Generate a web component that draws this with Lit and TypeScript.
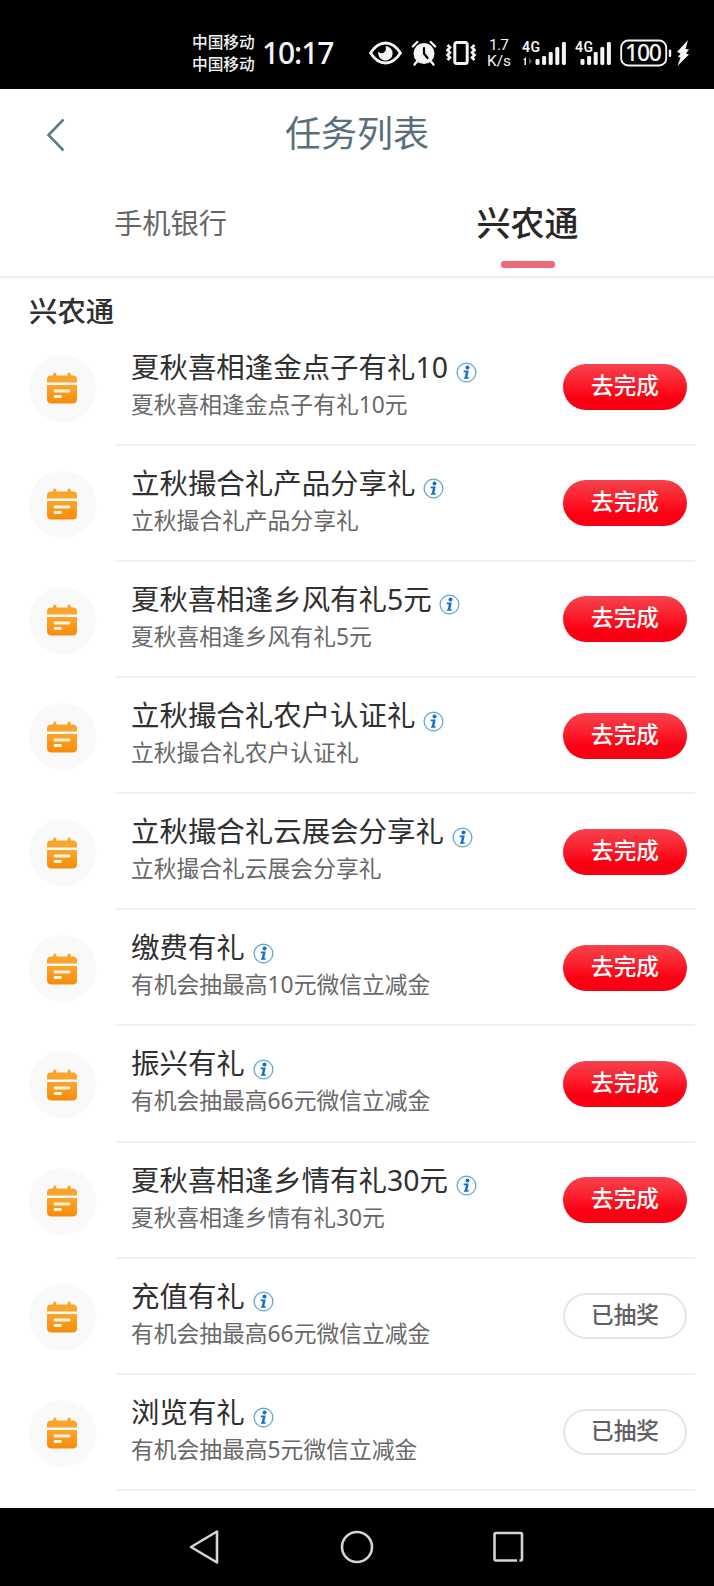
import { LitElement, html, css, svg } from "lit";
import { customElement, property } from "lit/decorators.js";

interface Task {
  title: string;
  desc: string;
  done: boolean;
}

const FONT = css`"Noto Sans", "Noto Sans CJK SC", sans-serif`;

const TASKS: Task[] = [
  { title: "夏秋喜相逢金点子有礼10", desc: "夏秋喜相逢金点子有礼10元", done: false },
  { title: "立秋撮合礼产品分享礼", desc: "立秋撮合礼产品分享礼", done: false },
  { title: "夏秋喜相逢乡风有礼5元", desc: "夏秋喜相逢乡风有礼5元", done: false },
  { title: "立秋撮合礼农户认证礼", desc: "立秋撮合礼农户认证礼", done: false },
  { title: "立秋撮合礼云展会分享礼", desc: "立秋撮合礼云展会分享礼", done: false },
  { title: "缴费有礼", desc: "有机会抽最高10元微信立减金", done: false },
  { title: "振兴有礼", desc: "有机会抽最高66元微信立减金", done: false },
  { title: "夏秋喜相逢乡情有礼30元", desc: "夏秋喜相逢乡情有礼30元", done: false },
  { title: "充值有礼", desc: "有机会抽最高66元微信立减金", done: true },
  { title: "浏览有礼", desc: "有机会抽最高5元微信立减金", done: true },
];

@customElement("status-bar")
class StatusBar extends LitElement {
  static styles = css`
    :host {
      display: flex;
      align-items: center;
      box-sizing: border-box;
      height: 89px;
      padding: 17px 0 0 192px;
      background: #000;
      color: #f4f4f4;
      font-family: ${FONT};
    }
    svg { display: block; flex: none; overflow: visible; }
    .carrier { width: 64px; font-size: 15.7px; font-weight: 500; line-height: 22px; white-space: nowrap; }
    .time {
      width: 113px;
      box-sizing: border-box;
      padding-left: 6px;
      font-size: 30px;
      font-weight: 500;
      line-height: 40px;
      letter-spacing: -1.1px;
      white-space: nowrap;
    }
    .icons { display: flex; align-items: center; gap: 9px; }
    .bolt { margin-left: -4px; }
    .speed { font: 400 15.5px Roboto, sans-serif; fill: #f4f4f4; }
    .net { font: 600 14px Roboto, sans-serif; fill: #f4f4f4; }
    .level { font: 500 23px "Noto Sans", sans-serif; fill: #f4f4f4; }
  `;

  private bars(x: number) {
    return [6, 9, 13, 18, 23].map(
      (h, i) => svg`<rect x=${x + i * 6.6} y=${25 - h} width="4" height=${h} rx="1.4" fill="#f4f4f4"/>`,
    );
  }

  render() {
    return html`
      <div class="carrier">中国移动<br />中国移动</div>
      <div class="time">10:17</div>
      <div class="icons">
        <svg width="33" height="26" viewBox="0 0 33 26" fill="none">
          <path d="M1.500 13Q8 3 16.500 3T31.500 13Q25 23 16.500 23T1.500 13Z" stroke="#f4f4f4" stroke-width="2.800" />
          <path d="M16.500 6A7.300 7.300 0 1 1 9.300 11.500Q11.500 14.200 14.500 12.700Q18 10.500 16.500 6Z" fill="#f4f4f4" />
        </svg>
        <svg width="26" height="26" viewBox="0 0 26 26" fill="none" stroke-linecap="round">
          <circle cx="13" cy="13.500" r="10.500" fill="#f4f4f4" />
          <path d="M1.800 6.500L6.300 2M24.200 6.500L19.700 2M6 21.500L3.500 24.500M20 21.500L22.500 24.500" stroke="#f4f4f4" stroke-width="2.400" />
          <path d="M13 8V13.500L16.500 18" stroke="#000" stroke-width="2.200" />
        </svg>
        <svg width="30" height="26" viewBox="0 0 30 26" fill="none" stroke="#f4f4f4">
          <rect x="8.800" y="2.500" width="12.400" height="21" rx="2" stroke-width="3" />
          <path d="M1.500 5L4 7.500L1.500 10L4 12.500L1.500 15L4 17.500L1.500 20M28.500 5L26 7.500L28.500 10L26 12.500L28.500 15L26 17.500L28.500 20" stroke-width="2.600" />
        </svg>
        <svg width="28" height="30" viewBox="0 0 28 30">
          <text class="speed" x="4" y="12" textLength="20">1.7</text>
          <text class="speed" x="2" y="27.500" textLength="24">K/s</text>
        </svg>
        <svg width="44" height="26" viewBox="0 0 44 26">
          <text class="net" x="0" y="11.500" textLength="18">4G</text>
          <path d="M1 20L4 17V25H2.500V20Z" fill="#f4f4f4" />
          <path d="M7 17V25L10 21.500Z" fill="#555" />
          ${this.bars(13.5)}
        </svg>
        <svg width="36" height="26" viewBox="0 0 36 26">
          <text class="net" x="0" y="11.500" textLength="18">4G</text>
          ${this.bars(5.5)}
        </svg>
        <svg width="52" height="28" viewBox="0 0 52 28">
          <rect x="1.200" y="1.500" width="45" height="25" rx="7" fill="none" stroke="#f4f4f4" stroke-width="1.900" />
          <text class="level" x="5" y="22.200" textLength="37">100</text>
          <rect x="48.800" y="10.500" width="2.400" height="7.500" rx="1" fill="#f4f4f4" />
        </svg>
        <svg class="bolt" width="12" height="26" viewBox="0 0 12 26">
          <path d="M11 0L0 12L3.500 13.500L1 17L3.500 17.500L0.500 26L12 14.500L9 13.500L12 9.500L8.500 9Z" fill="#f4f4f4" />
        </svg>
      </div>
    `;
  }
}

@customElement("task-row")
class TaskRow extends LitElement {
  @property({ attribute: false }) task!: Task;

  static styles = css`
    :host { display: flex; height: 116.150px; padding: 0 19px 0 29px; font-family: ${FONT}; }
    svg { display: block; flex: none; }
    .badge {
      display: flex;
      align-items: center;
      justify-content: center;
      box-sizing: border-box;
      width: 67px;
      height: 67px;
      margin-top: 25px;
      padding: 0 1px 0 0;
      border-radius: 50%;
      background: #f9f9f9;
    }
    .body {
      flex: 1;
      display: flex;
      box-sizing: border-box;
      margin-left: 20px;
      padding: 17px 8px 0 15px;
      border-bottom: 2px solid #f0f0f0;
    }
    .text { flex: 1; white-space: nowrap; }
    .title { display: flex; height: 41px; line-height: 40px; font-size: 28.450px; color: #303030; }
    .info { margin: 15.500px 0 0 7.800px; }
    .desc { height: 34px; line-height: 34px; font-size: 22.780px; color: #686868; }
    .action {
      box-sizing: border-box;
      width: 124px;
      height: 46px;
      margin-top: 17.500px;
      border-radius: 23px;
      background: linear-gradient(#f5434d 0%, #fb1c2a 45%, #fb0012 72%, #f80014 100%);
      color: #fff;
      font-size: 22.600px;
      font-weight: 500;
      line-height: 44px;
      text-align: center;
    }
    .done { background: #fff; border: 2px solid #e6e6e6; color: #606060; line-height: 40px; }
  `;

  render() {
    const { title, desc, done } = this.task;
    return html`
      <div class="badge">
        <svg width="30" height="32" viewBox="0 0 30 32">
          <defs>
            <linearGradient id="amber" x1="0" y1="0" x2="0" y2="1">
              <stop offset="0" stop-color="#faa62c" />
              <stop offset="1" stop-color="#f78b0b" />
            </linearGradient>
          </defs>
          <path d="M0 10.500V7.500Q0 3.500 4 3.500H6L6.500 1.200Q7.800 -0.200 9.100 1.200L9.600 3.500H20.400L20.900 1.200Q22.200 -0.200 23.500 1.200L24 3.500H26Q30 3.500 30 7.500V10.500Z" fill="#f9a42b" />
          <path d="M0 13H30V27Q30 31.500 25.500 31.500H4.500Q0 31.500 0 27Z" fill="url(#amber)" />
          <path d="M8 19H22M8 24.500H13.500" stroke="#fff5e2" stroke-width="2.800" stroke-linecap="round" />
        </svg>
      </div>
      <div class="body">
        <div class="text">
          <div class="title">
            ${title}
            <svg class="info" width="21" height="21" viewBox="0 0 21 21">
              <circle cx="10.500" cy="10.500" r="9.400" fill="#fbfeff" stroke="#6ba6cf" stroke-width="1.300" />
              <circle cx="11.500" cy="5.600" r="2" fill="#176fc0" />
              <path d="M7.800 8.500H12.700L11.300 15.200H12.900L12.400 16.700H7.800L8.100 15.500L8.900 15L9.800 10.200H7.600Z" fill="#176fc0" />
            </svg>
          </div>
          <div class="desc">${desc}</div>
        </div>
        <div class="action ${done ? "done" : ""}">${done ? "已抽奖" : "去完成"}</div>
      </div>
    `;
  }
}

@customElement("app-root")
class AppRoot extends LitElement {
  static styles = css`
    :host {
      display: flex;
      flex-direction: column;
      width: 714px;
      height: 1586px;
      overflow: hidden;
      background: #fff;
      font-family: ${FONT};
    }
    svg { display: block; }
    .header {
      display: grid;
      grid-template-columns: 66px 1fr 66px;
      align-items: center;
      height: 92px;
      color: #5a6e7a;
    }
    .back { margin-left: 46px; }
    .heading { padding-bottom: 2px; font-size: 36px; line-height: 50px; text-align: center; }
    .tabs {
      display: grid;
      grid-template-columns: 341px 1fr;
      box-sizing: border-box;
      height: 97px;
      border-bottom: 2px solid #ededed;
      text-align: center;
    }
    .tab { font-size: 28.300px; line-height: 85px; color: #666; }
    .active {
      display: flex;
      flex-direction: column;
      align-items: center;
      font-size: 34px;
      font-weight: 500;
      line-height: 84px;
      color: #282828;
    }
    .label { height: 80px; }
    .mark { width: 54px; height: 6.500px; border-radius: 3px; background: #ed6a76; }
    .section {
      height: 51.600px;
      padding-left: 29px;
      font-size: 28.400px;
      font-weight: 500;
      line-height: 67px;
      color: #303030;
    }
    .list { flex: 1; min-height: 0; }
    .nav {
      display: flex;
      flex: none;
      align-items: center;
      justify-content: space-between;
      box-sizing: border-box;
      height: 78px;
      padding: 0 190px 0 188px;
      background: #000;
    }
  `;

  render() {
    return html`
      <status-bar></status-bar>
      <div class="header">
        <svg class="back" width="20" height="34" viewBox="0 0 20 34">
          <path d="M17.500 1.500L2.500 17L17.500 32.500" fill="none" stroke="#5f7c8e" stroke-width="2.600" />
        </svg>
        <div class="heading">任务列表</div>
      </div>
      <div class="tabs">
        <div class="tab">手机银行</div>
        <div class="tab active"><div class="label">兴农通</div><div class="mark"></div></div>
      </div>
      <div class="section">兴农通</div>
      <div class="list">${TASKS.map((t) => html`<task-row .task=${t}></task-row>`)}</div>
      <div class="nav">
        <svg width="34" height="36" viewBox="0 0 34 36">
          <path d="M29 2.500V33.500L3 18Z" fill="none" stroke="#d4d4d4" stroke-width="2.600" stroke-linejoin="round" />
        </svg>
        <svg width="34" height="36" viewBox="0 0 34 36">
          <circle cx="17" cy="18" r="15" fill="none" stroke="#d4d4d4" stroke-width="2.600" />
        </svg>
        <svg width="32" height="36" viewBox="0 0 32 36">
          <path d="M25 31.500H4Q2.500 31.500 2.500 30V5.500Q2.500 4 4 4H28.500Q30 4 30 5.500V30Q30 31.500 28.500 31.500H27.500" fill="none" stroke="#d4d4d4" stroke-width="2.600" />
        </svg>
      </div>
    `;
  }
}
